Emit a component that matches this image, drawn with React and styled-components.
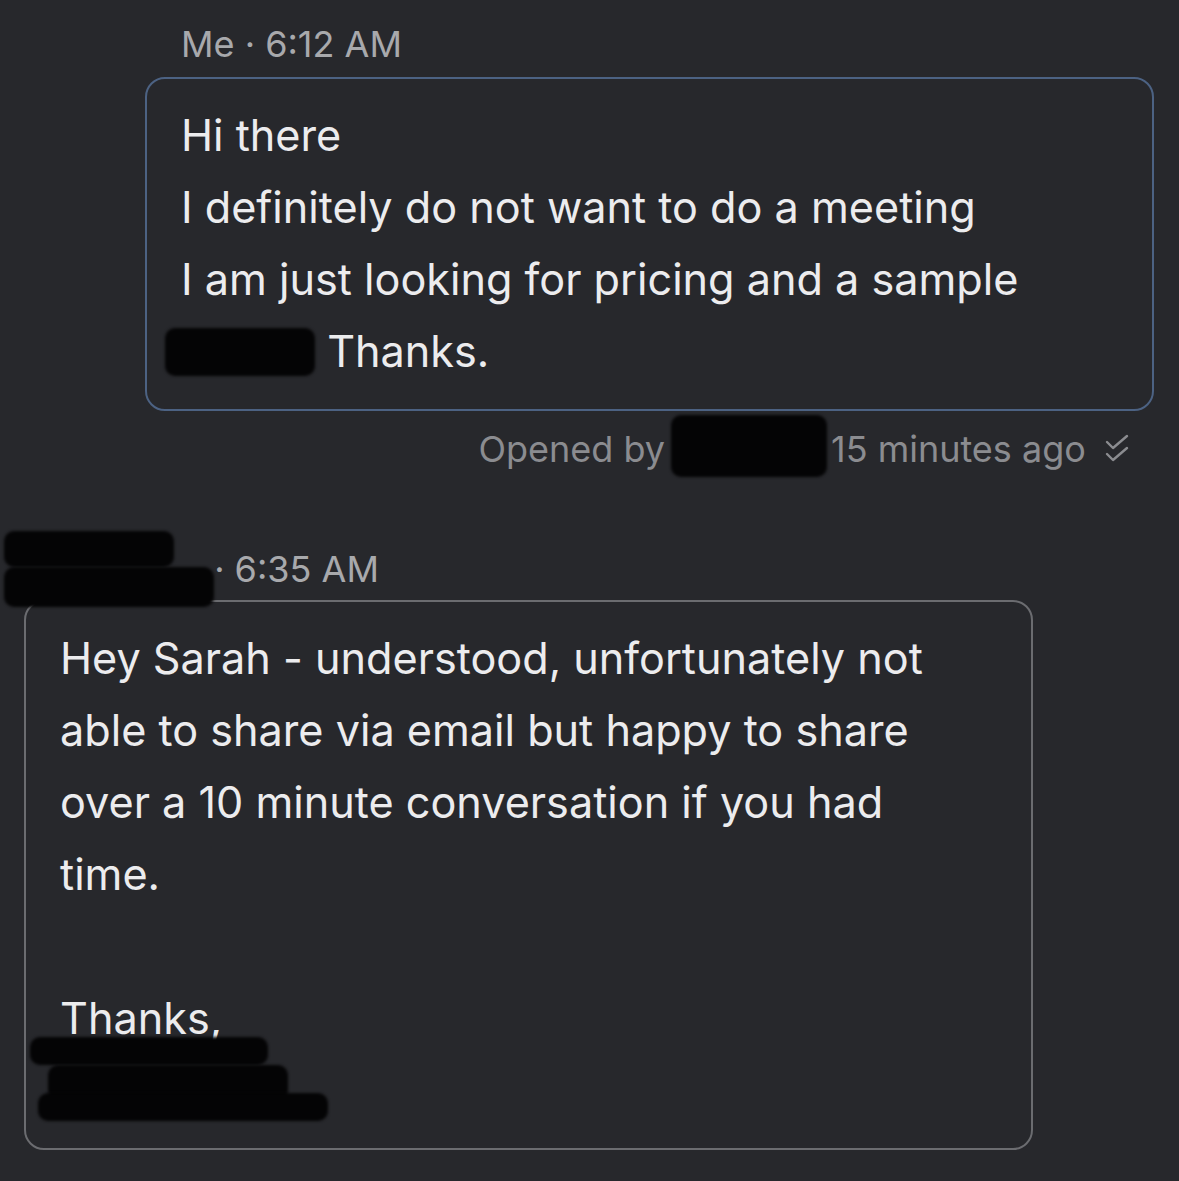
import React from 'react';
import styled, { createGlobalStyle } from 'styled-components';

const GlobalStyle = createGlobalStyle`
  html, body {
    margin: 0;
    padding: 0;
    background: #27282c;
  }
  body {
    font-family: Inter, "Noto Sans", "Liberation Sans", sans-serif;
    -webkit-font-smoothing: antialiased;
  }
`;

const Thread = styled.div`
  display: flex;
  flex-direction: column;
  width: 1179px;
  min-height: 1181px;
  box-sizing: border-box;
  padding: 22px 25px 0 24px;
`;

const Message = styled.div`
  display: flex;
  flex-direction: column;
  align-items: flex-start;
  margin-left: ${(p) => p.$indent || 0}px;
  margin-top: ${(p) => p.$top || 0}px;
`;

const Meta = styled.div`
  font-size: 36px;
  line-height: 44px;
  color: #a8a9ac;
  padding-left: ${(p) => p.$pad || 0}px;
  margin-bottom: ${(p) => p.$gap ?? 11}px;
  display: flex;
  align-items: center;
  white-space: pre;
`;

const Bubble = styled.div`
  box-sizing: border-box;
  width: 1009px;
  border: 2px solid ${(p) => (p.$mine ? '#4c6283' : '#6b6c70')};
  border-radius: 20px;
  padding: 20px 30px 22px 34px;
  color: #ececee;
  font-size: 43.2px;
  line-height: 72px;
`;

const Line = styled.div`
  white-space: nowrap;
  min-height: 72px;
`;

const Redact = styled.span`
  display: inline-block;
  vertical-align: middle;
  width: ${(p) => p.$w}px;
  height: ${(p) => p.$h || 40}px;
  margin: ${(p) => p.$m || '0'};
  background: #040405;
  border-radius: 10px;
  filter: blur(1.5px);
`;

const RedactStack = styled.span`
  display: inline-flex;
  flex-direction: column;
  vertical-align: middle;
  gap: ${(p) => p.$gap || 0}px;
  margin: ${(p) => p.$m || '0'};
`;

const Status = styled.div`
  align-self: flex-end;
  display: flex;
  align-items: center;
  gap: 8px;
  margin-top: 16px;
  margin-right: 24px;
  font-size: 36px;
  line-height: 44px;
  color: #8b8c90;
  white-space: pre;
`;

const Check = () => (
  <svg width="26" height="30" viewBox="0 0 26 30" fill="none" stroke="#8b8c90" strokeWidth="2.4" strokeLinecap="round" strokeLinejoin="round">
    <path d="M3 8l6 6L23 2" />
    <path d="M3 20l6 6L23 14" />
  </svg>
);

export default function App() {
  return (
    <>
      <GlobalStyle />
      <Thread>
        <Message $indent={121}>
          <Meta $pad={36}>Me · 6:12 AM</Meta>
          <Bubble $mine>
            <Line>Hi there</Line>
            <Line>I definitely do not want to do a meeting</Line>
            <Line>I am just looking for pricing and a sample</Line>
            <Line>
              <Redact $w={150} $h={48} $m="-6px 0 0 -16px" /> Thanks.
            </Line>
          </Bubble>
          <Status>
            Opened by<Redact $w={156} $h={62} $m="-12px -4px -6px -2px" />15 minutes ago <Check />
          </Status>
        </Message>
        <Message $top={76}>
          <Meta $gap={9}>
            <RedactStack $gap={0} $m="-30px -10px -30px -20px">
              <Redact $w={170} $h={36} />
              <Redact $w={210} $h={40} />
            </RedactStack>
            {' · 6:35 AM'}
          </Meta>
          <Bubble>
            <Line>Hey Sarah - understood, unfortunately not</Line>
            <Line>able to share via email but happy to share</Line>
            <Line>over a 10 minute conversation if you had</Line>
            <Line>time.</Line>
            <Line />
            <Line>Thanks,</Line>
            <Line>
              <RedactStack $gap={0} $m="-30px 0 0 -30px">
                <Redact $w={238} $h={28} />
                <Redact $w={240} $h={36} $m="0 0 0 18px" />
                <Redact $w={290} $h={28} $m="-8px 0 0 8px" />
              </RedactStack>
            </Line>
          </Bubble>
        </Message>
      </Thread>
    </>
  );
}
